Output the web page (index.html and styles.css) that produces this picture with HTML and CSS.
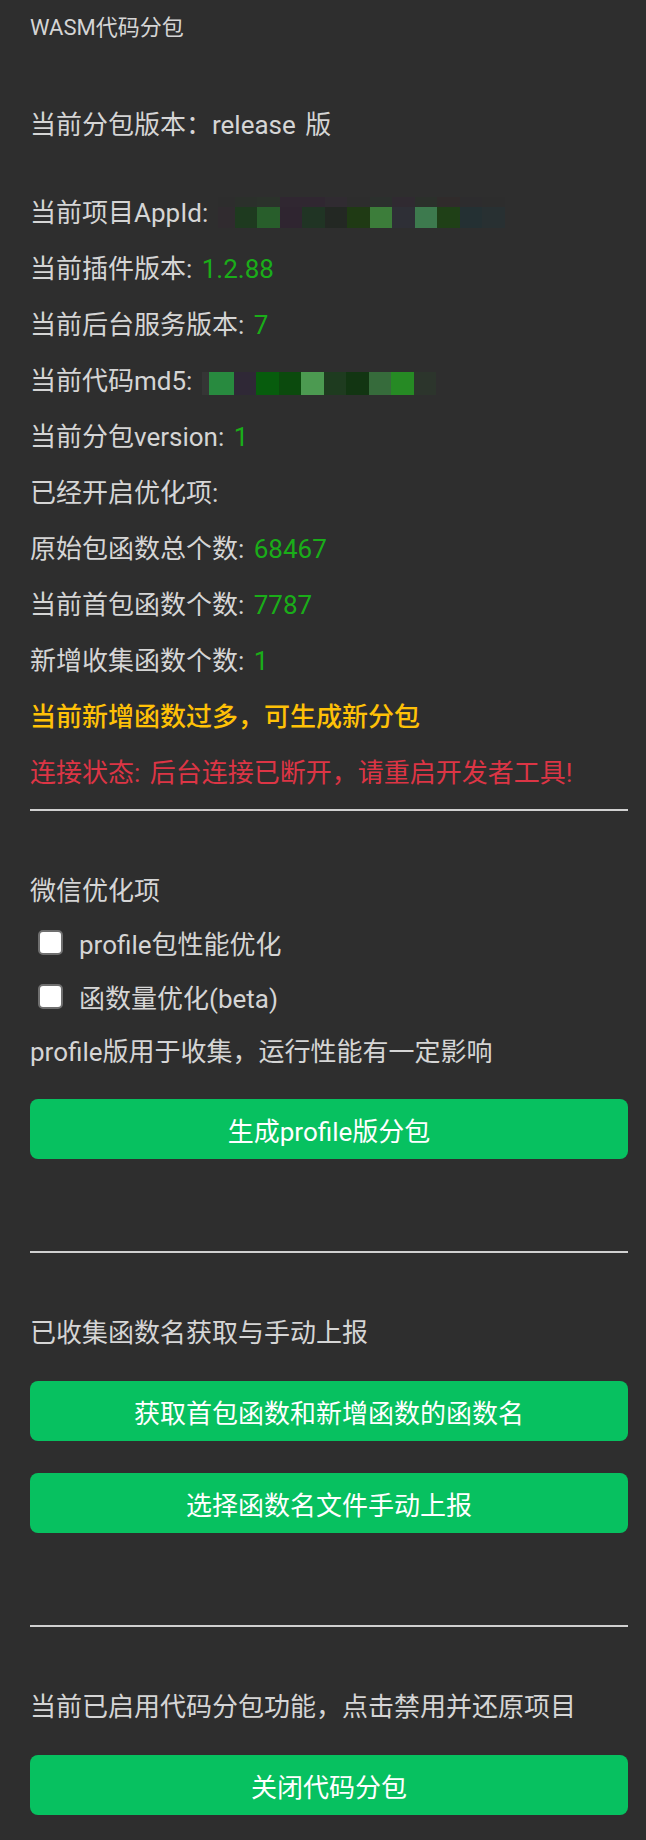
FILE: index.html
```html
<!DOCTYPE html>
<html lang="zh-CN">
<head>
<meta charset="utf-8">
<title>WASM代码分包</title>
<link rel="stylesheet" href="styles.css">
</head>
<body>
<main class="page">
  <div class="title">WASM代码分包</div>
  <p class="line version">当前分包版本：release 版</p>

  <p class="line first">当前项目AppId: <span class="mosaic appid">
    <span class="row top"><i class="c1"></i><i class="c2"></i><i class="c3"></i><i class="c4"></i><i class="c5"></i><i class="c6"></i><i class="c7"></i><i class="c8"></i><i class="c9"></i><i class="c10"></i><i class="c11"></i><i class="c12"></i><i class="c13"></i></span>
    <span class="row main"><i class="c1"></i><i class="c2"></i><i class="c3"></i><i class="c4"></i><i class="c5"></i><i class="c6"></i><i class="c7"></i><i class="c8"></i><i class="c9"></i><i class="c10"></i><i class="c11"></i><i class="c12"></i><i class="c13"></i></span>
  </span></p>
  <p class="line">当前插件版本: <span class="num">1.2.88</span></p>
  <p class="line">当前后台服务版本: <span class="num">7</span></p>
  <p class="line">当前代码md5: <span class="mosaic md5"><i class="m1"></i><i class="m2"></i><i class="m3"></i><i class="m4"></i><i class="m5"></i><i class="m6"></i><i class="m7"></i><i class="m8"></i><i class="m9"></i><i class="m10"></i><i class="m11"></i></span></p>
  <p class="line">当前分包version: <span class="num">1</span></p>
  <p class="line">已经开启优化项:</p>
  <p class="line">原始包函数总个数: <span class="num">68467</span></p>
  <p class="line">当前首包函数个数: <span class="num">7787</span></p>
  <p class="line">新增收集函数个数: <span class="num">1</span></p>
  <p class="line warn">当前新增函数过多，可生成新分包</p>
  <p class="line error">连接状态: 后台连接已断开，请重启开发者工具!</p>

  <hr class="divider first-divider">

  <section class="section">
    <p class="heading">微信优化项</p>
    <label class="check"><input type="checkbox" class="box">profile包性能优化</label>
    <label class="check second"><input type="checkbox" class="box">函数量优化(beta)</label>
    <p class="note">profile版用于收集，运行性能有一定影响</p>
    <button class="btn btn-after-note">生成profile版分包</button>
  </section>

  <hr class="divider">

  <section class="section">
    <p class="heading">已收集函数名获取与手动上报</p>
    <button class="btn">获取首包函数和新增函数的函数名</button>
    <button class="btn btn-next">选择函数名文件手动上报</button>
  </section>

  <hr class="divider">

  <section class="section">
    <p class="heading">当前已启用代码分包功能，点击禁用并还原项目</p>
    <button class="btn">关闭代码分包</button>
  </section>
</main>
</body>
</html>
```

FILE: styles.css
```css
html, body {
  margin: 0;
  padding: 0;
  background: #2e2e2e;
}

body {
  font-family: Roboto, "Noto Sans CJK SC", sans-serif;
  color: #d5d5d5;
  font-size: 26px;
}

.page {
  width: 598px;
  margin-left: 30px;
  padding-top: 13px;
  padding-bottom: 25px;
}

.title {
  font-size: 22px;
  line-height: 30px;
}

.line {
  margin: 20px 0 0;
  line-height: 36px;
  height: 36px;
  white-space: nowrap;
  word-spacing: 3px;
}

.line.version {
  margin-top: 64px;
}

.line.first {
  margin-top: 52px;
}

.num {
  color: #1aad19;
}

.warn {
  color: #ffc107;
  font-weight: 500;
}

.error {
  color: #dc3545;
}

.divider {
  margin: 18px 0 0;
  border: 0;
  height: 2px;
  background: #d0d0d0;
}

.section + .divider {
  margin-top: 92px;
}

.heading {
  margin: 62px 0 0;
  line-height: 36px;
  height: 36px;
}

.check {
  display: flex;
  align-items: center;
  height: 36px;
  margin-top: 18px;
  line-height: 36px;
}

.box {
  appearance: none;
  -webkit-appearance: none;
  width: 25px;
  height: 25px;
  margin: 0 16px 6px 8px;
  background: #ffffff;
  border: 2px solid #6f6f6f;
  border-radius: 5px;
  box-sizing: border-box;
  flex: none;
}

.note {
  margin: 17px 0 0;
  line-height: 36px;
  height: 36px;
}

.btn {
  display: flex;
  align-items: center;
  justify-content: center;
  width: 100%;
  height: 60px;
  margin-top: 30px;
  padding: 0;
  border: 0;
  border-radius: 8px;
  background: #07c160;
  color: #ffffff;
  font-family: Roboto, "Noto Sans CJK SC", sans-serif;
  font-size: 26px;
}

.btn.btn-after-note {
  margin-top: 29px;
}

.btn.btn-next {
  margin-top: 32px;
}

/* pixelated (redacted) values */
.mosaic {
  display: inline-flex;
  vertical-align: middle;
}

.mosaic i {
  display: block;
}

.appid {
  flex-direction: column;
  position: relative;
  top: -3px;
}

.appid .row {
  display: flex;
}

.appid .row.top i { height: 10px; }
.appid .row.main i { height: 21px; }

.appid i { width: 22.5px; }
.appid i.c1 { width: 17px; }

.appid .top .c1 { background: #2d2d2d; }
.appid .top .c2 { background: #2b302b; }
.appid .top .c3 { background: #2b322b; }
.appid .top .c4 { background: #302731; }
.appid .top .c5 { background: #302731; }
.appid .top .c6 { background: #302b31; }
.appid .top .c7 { background: #2d2d2d; }
.appid .top .c8 { background: #2b302d; }
.appid .top .c9 { background: #302a31; }
.appid .top .c10 { background: #2b302b; }
.appid .top .c11 { background: #302b2b; }
.appid .top .c12 { background: #2d2c2e; }
.appid .top .c13 { background: #2d2d2d; }

.appid .main .c1 { background: #302b2f; }
.appid .main .c2 { background: #1e3a1f; }
.appid .main .c3 { background: #285e2b; }
.appid .main .c4 { background: #2f2530; }
.appid .main .c5 { background: #203424; }
.appid .main .c6 { background: #232823; }
.appid .main .c7 { background: #1f3a14; }
.appid .main .c8 { background: #3c7d3a; }
.appid .main .c9 { background: #2e2f36; }
.appid .main .c10 { background: #3d7a4e; }
.appid .main .c11 { background: #1f4017; }
.appid .main .c12 { background: #243033; }
.appid .main .c13 { background: #283032; }

.md5 i { width: 22.5px; height: 23px; }
.md5 .m1 { width: 7px; background: #353535; }
.md5 .m2 { width: 25px; background: #288a3f; }
.md5 .m3 { background: #2f2836; }
.md5 .m4 { background: #075c0d; }
.md5 .m5 { background: #0b4a0d; }
.md5 .m6 { background: #4c9a51; }
.md5 .m7 { background: #1e3b1f; }
.md5 .m8 { background: #123512; }
.md5 .m9 { background: #366b3b; }
.md5 .m10 { background: #268a24; }
.md5 .m11 { background: #2c352c; }
```
